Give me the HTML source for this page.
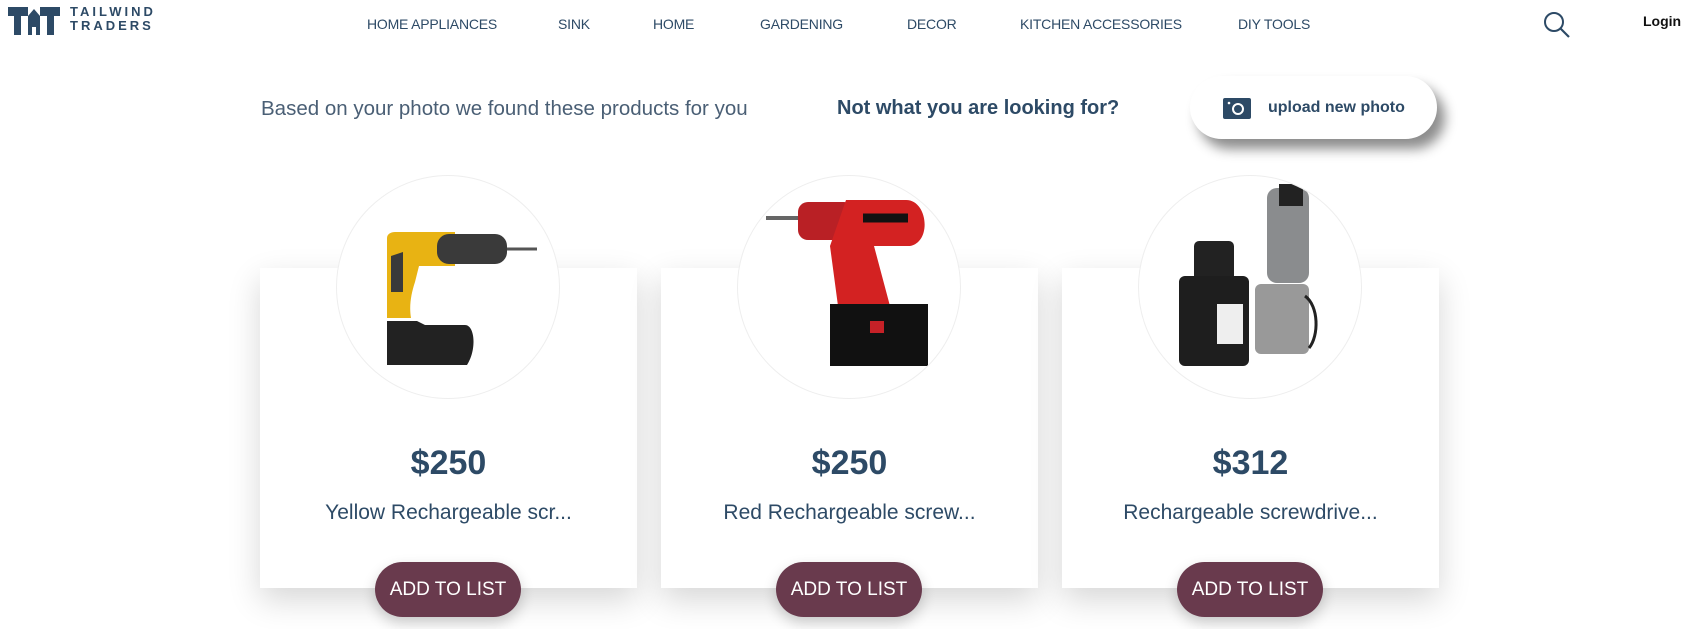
<!DOCTYPE html>
<html><head><meta charset="utf-8"><style>
body{margin:0;width:1687px;height:629px;overflow:hidden;background:#fff;font-family:"Liberation Sans",sans-serif;color:#2d4a66;position:relative}
.a{position:absolute}
.nav{position:absolute;top:16px;font-size:14px;color:#2d4a66;white-space:nowrap;letter-spacing:-0.2px}
.card{position:absolute;top:268px;width:377px;height:320px;background:#fff;box-shadow:0 12px 30px rgba(0,0,0,.16)}
.circ{position:absolute;top:175px;width:224px;height:224px;border-radius:50%;background:#fff;border:1px solid #eee;box-sizing:border-box;overflow:hidden}
.price{position:absolute;top:444px;width:377px;text-align:center;font-size:34px;font-weight:bold}
.name{position:absolute;top:501px;width:377px;text-align:center;font-size:21px}
.btn{position:absolute;top:562px;width:146px;height:55px;border-radius:28px;background:#693a4d;color:#fff;font-size:19px;text-align:center;line-height:55px;box-shadow:0 6px 14px rgba(0,0,0,.2)}
</style></head><body>
<svg class="a" style="left:8px;top:7px" width="52" height="28" viewBox="0 0 52 28"><path d="M0 0H20V9H13V28H6V9H0Z M32 0H52V9H46V28H39V9H32Z M20 9L26 2L32 9V28H28V20H24V28H20Z" fill="#2d4a66"/></svg>
<div class="a" style="left:70px;top:5px;font-size:13px;font-weight:bold;letter-spacing:3px;line-height:14px;color:#2d4a66">TAILWIND<br>TRADERS</div>
<div class="nav" style="left:367px">HOME APPLIANCES</div>
<div class="nav" style="left:558px">SINK</div>
<div class="nav" style="left:653px">HOME</div>
<div class="nav" style="left:760px">GARDENING</div>
<div class="nav" style="left:907px">DECOR</div>
<div class="nav" style="left:1020px">KITCHEN ACCESSORIES</div>
<div class="nav" style="left:1238px">DIY TOOLS</div>
<svg class="a" style="left:1543px;top:11px" width="28" height="28" viewBox="0 0 28 28"><circle cx="11" cy="11" r="9" fill="none" stroke="#2d4a66" stroke-width="2"/><path d="M17.5 17.5L26 26" stroke="#2d4a66" stroke-width="2.2"/></svg>
<div class="a" style="left:1643px;top:13px;font-size:14px;font-weight:bold;color:#111">Login</div>
<div class="a" style="left:261px;top:97px;font-size:20.5px;color:#4a5f75">Based on your photo we found these products for you</div>
<div class="a" style="left:837px;top:97px;font-size:20px;font-weight:bold">Not what you are looking for?</div>
<div class="a" style="left:1190px;top:76px;width:247px;height:63px;border-radius:32px;background:#fff;box-shadow:8px 10px 12px rgba(0,0,0,.45)"></div>
<svg class="a" style="left:1223px;top:98px" width="28" height="21"><rect width="28" height="21" rx="2" fill="#2d4a66"/><circle cx="15" cy="11" r="5" fill="none" stroke="#fff" stroke-width="2"/><circle cx="6" cy="5" r="1.3" fill="#fff"/></svg>
<div class="a" style="left:1268px;top:99px;font-size:16px;font-weight:bold">upload new photo</div>

<div class="card" style="left:260px"></div>
<div class="card" style="left:661px"></div>
<div class="card" style="left:1062px"></div>

<div class="circ" style="left:336px"><svg width="224" height="224"><path d="M50 62c0-4 4-6 8-6h60v34h-36l-4 16c-4 12-6 24-4 36h-24z" fill="#e8b313"/><path d="M54 80l12-4 0 40-12 0z" fill="#3a3a3a"/><rect x="100" y="58" width="70" height="30" rx="12" fill="#3a3a3a"/><path d="M170 73h30" stroke="#555" stroke-width="3"/><path d="M50 145h30l8 4h40c10 0 12 25 2 40H50z" fill="#222"/></svg></div>
<div class="circ" style="left:737px"><svg width="224" height="224"><path d="M28 42h36" stroke="#666" stroke-width="4"/><rect x="60" y="26" width="56" height="38" rx="10" fill="#b92025"/><path d="M108 24h60c22 0 26 42 4 46h-36l16 60h-52l-8-60z" fill="#d32222"/><path d="M125 42h45" stroke="#111" stroke-width="9"/><path d="M92 128h98v62h-98z" fill="#111"/><rect x="132" y="145" width="14" height="12" fill="#c62127"/></svg></div>
<div class="circ" style="left:1138px"><svg width="224" height="224"><rect x="128" y="12" width="42" height="95" rx="10" fill="#8a8c8e"/><rect x="140" y="8" width="24" height="22" fill="#222"/><rect x="116" y="108" width="54" height="70" rx="6" fill="#999"/><path d="M166 120c14 10 14 40 4 52" stroke="#222" stroke-width="3" fill="none"/><rect x="55" y="65" width="40" height="45" rx="5" fill="#222"/><rect x="40" y="100" width="70" height="90" rx="6" fill="#1e1e1e"/><rect x="78" y="128" width="26" height="40" fill="#eee"/></svg></div>

<div class="price" style="left:260px">$250</div><div class="name" style="left:260px">Yellow Rechargeable scr...</div>
<div class="price" style="left:661px">$250</div><div class="name" style="left:661px">Red Rechargeable screw...</div>
<div class="price" style="left:1062px">$312</div><div class="name" style="left:1062px">Rechargeable screwdrive...</div>
<div class="btn" style="left:375px">ADD TO LIST</div>
<div class="btn" style="left:776px">ADD TO LIST</div>
<div class="btn" style="left:1177px">ADD TO LIST</div>
</body></html>
